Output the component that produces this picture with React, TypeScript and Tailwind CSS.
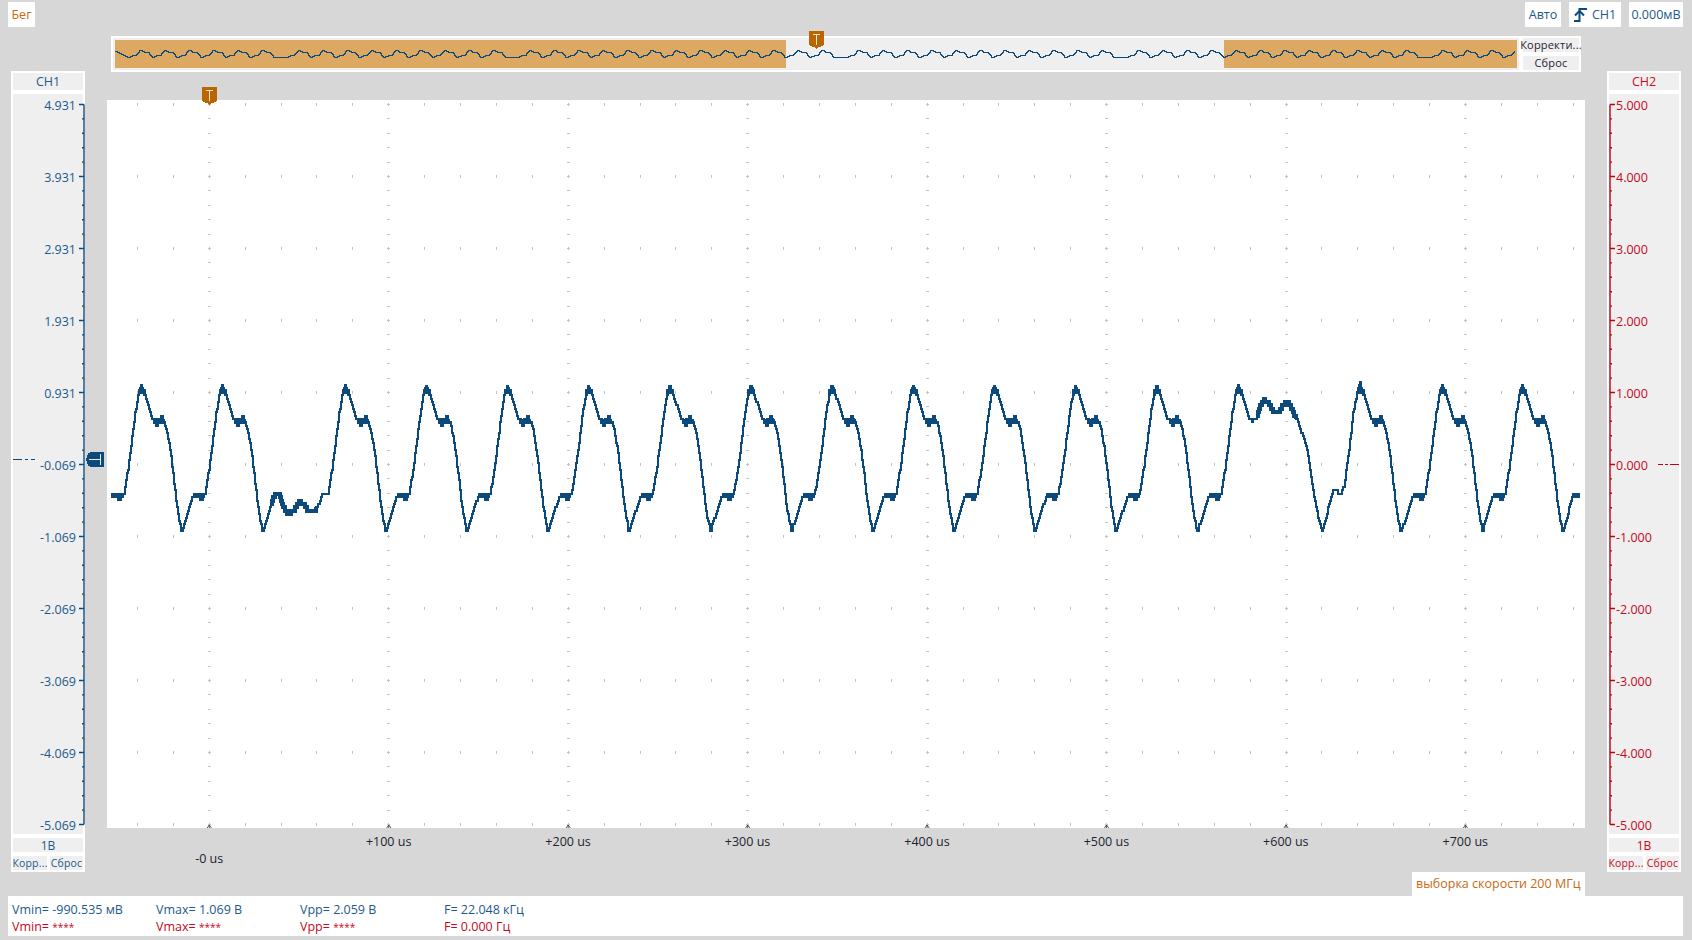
const BLUE = '#0b4a7a'
const RED = '#c00015'
const PEAK_STEP = 81.15

// one regular period of the signal, [offset from peak, y in page px]
const SHAPE: [number, number][] = [
  [-40.3, 530], [-36, 516.7], [-32.7, 506.7], [-29.3, 496], [-27.5, 495], [-17.5, 495], [-16, 486.7],
  [-12.7, 466.7], [-9.3, 440], [-6, 413.3], [-3.3, 396.7], [-1.5, 390.7], [0, 386.7], [1.5, 390.7],
  [4, 396.7], [7.3, 406.7], [11.3, 420], [14, 421], [20, 420], [23.3, 421.7], [25.7, 430], [29, 450],
  [32.3, 476.7], [35.7, 506.7], [39, 525], [41, 530],
]

const GLITCH_A: [number, number][] = [
  [268, 515], [272, 500], [275, 494], [279, 495], [283, 507], [287, 513], [293, 512], [299, 502], [303, 503],
  [307, 511], [311, 512], [315, 510], [318, 505], [323, 493],
]
const GLITCH_B: [number, number][] = [
  [1252, 421], [1256, 418], [1260, 407], [1264, 400], [1267, 401], [1271, 409], [1275, 413], [1279, 412],
  [1283, 405], [1287, 402], [1291, 408], [1297, 420], [1300, 428], [1307, 450], [1313, 490], [1317, 512],
  [1320, 525], [1322, 530], [1326, 518], [1330, 500], [1333, 491], [1336, 491], [1340, 495], [1344, 486],
  [1349, 450], [1353, 413], [1357, 392], [1360, 383],
]

const MAIN_PEAKS = Array.from({ length: 11 }, (_, i) => 345 + i * PEAK_STEP)

function buildTrace() {
  const pts: [number, number][] = [[111, 495]]
  const add = (x: number, y: number) => {
    if (x > pts[pts.length - 1][0]) pts.push([x, y])
  }
  const period = (p: number, from = -99, to = 99) =>
    SHAPE.forEach(([d, y]) => {
      if (d >= from && d <= to) add(p + d, y)
    })
  period(141)
  period(222)
  GLITCH_A.forEach(([x, y]) => add(x, y))
  MAIN_PEAKS.forEach(p => period(p))
  period(1238, -99, 11.3)
  GLITCH_B.forEach(([x, y]) => add(x, y))
  period(1360, 1)
  period(1442)
  period(1522)
  add(1573, 495)
  add(1580, 495)
  return pts
}

function interp(pts: [number, number][], x: number) {
  let i = 1
  while (i < pts.length - 1 && pts[i][0] < x) i++
  const [x0, y0] = pts[i - 1]
  const [x1, y1] = pts[i]
  return y0 + ((y1 - y0) * (x - x0)) / (x1 - x0)
}

function stairPath(pts: [number, number][], x0: number, x1: number, base: number, q: number) {
  const snap = (y: number) => base + Math.round((y - base) / q) * q
  let d = `M${x0} ${snap(interp(pts, x0)).toFixed(1)}`
  for (let x = x0 + 1; x <= x1; x++) {
    d += `H${x}V${snap(interp(pts, x)).toFixed(1)}`
  }
  return d
}

const rect = (x: number, y: number, w: number, h: number) => `M${x} ${y}h${w}v${h}h${-w}Z`

function blocksFor(p: number, pre: boolean, post: boolean) {
  let d = rect(p - 3.5, 389, 8, 5) + rect(p - 1.5, 385, 3.5, 4)
  if (pre) d += rect(p - 28, 492.5, 11, 5) + rect(p - 23.5, 497, 5, 4)
  if (post) {
    d += rect(p + 12, 418.5, 12, 5) + rect(p + 14, 423, 4, 4) + rect(p + 18.5, 415, 4, 4)
    d += rect(p + 39, 526.5, 4, 5)
  }
  return d
}

const trace = buildTrace()
const tracePath = stairPath(trace, 111, 1580, 385, 3.4)
const blocksPath =
  rect(111, 492.5, 13, 5) +
  rect(117, 497, 5, 4) +
  blocksFor(141, false, true) +
  blocksFor(222, true, true) +
  MAIN_PEAKS.map((p, i) => blocksFor(p, i > 0, true)).join('') +
  blocksFor(1238, true, false) +
  blocksFor(1360, false, true) +
  blocksFor(1442, true, true) +
  blocksFor(1522, true, true) +
  rect(1573, 492.5, 7, 5)
const thickA = stairPath(trace, 271, 316, 385, 3.4)
const thickB = stairPath(trace, 1257, 1296, 385, 3.4)

// overview strip: same shape squeezed to about 24px a period
function overviewPeaks() {
  const out: number[] = []
  let p = 140
  const gaps = [262, 493, 818, 1098, 1400]
  while (p < 1520) {
    out.push(p)
    const gap = gaps.some(g => Math.abs(p - g) < 8)
    p += gap ? 36.4 : 24.35
  }
  return out
}

function buildOverview() {
  const k = 24.35 / PEAK_STEP
  const pts: [number, number][] = [[115, 51]]
  overviewPeaks().forEach(p => {
    SHAPE.forEach(([d, y]) => {
      const x = p + d * k
      if (x > pts[pts.length - 1][0]) pts.push([x, 53.5 + (y - 457) * 0.052])
    })
  })
  pts.push([1515, 51.5])
  return pts
}

const overviewPath = stairPath(buildOverview(), 115, 1514, 50, 1)

const SUB_X = Array.from({ length: 41 }, (_, i) => 137.5 + i * 35.89)
const MAJOR_X = Array.from({ length: 8 }, (_, i) => 209.3 + i * 179.45)
const MAJOR_Y = Array.from({ length: 11 }, (_, i) => 104.5 + i * 72)
const SUB_Y = Array.from({ length: 51 }, (_, i) => 104.5 + i * 14.4)

const gridPath =
  MAJOR_Y.flatMap(y => SUB_X.map(x => `M${x.toFixed(1)} ${y - 1.5}v3`)).join('') +
  MAJOR_X.flatMap(x => SUB_Y.map(y => `M${(x - 1.5).toFixed(1)} ${y.toFixed(1)}h3`)).join('')

const LEFT_LABELS = ['4.931', '3.931', '2.931', '1.931', '0.931', '-0.069', '-1.069', '-2.069', '-3.069', '-4.069', '-5.069']
const RIGHT_LABELS = ['5.000', '4.000', '3.000', '2.000', '1.000', '0.000', '-1.000', '-2.000', '-3.000', '-4.000', '-5.000']
const TIME_LABELS = ['-0 us', '+100 us', '+200 us', '+300 us', '+400 us', '+500 us', '+600 us', '+700 us']

const STATS = [
  ['Vmin= -990.535 мВ', 'Vmin= '],
  ['Vmax= 1.069 В', 'Vmax= '],
  ['Vpp= 2.059 В', 'Vpp= '],
  ['F= 22.048 кГц', 'F= 0.000 Гц'],
]

function TMarker() {
  return (
    <svg width="15" height="18" viewBox="0 0 15 18" className="block" shapeRendering="crispEdges">
      <path d="M0 0H15V14H14V15H12V16H9V17H8V18H7V17H6V16H3V15H1V14H0Z" fill="#b96500" />
      <path d="M4 3H11V4H8V14H7V4H4Z" fill="#f4e3cf" />
    </svg>
  )
}

function ScaleTicks({ color, side }: { color: string; side: 'left' | 'right' }) {
  // drawn with the spine on x=1 for the right hand axis, mirrored for the left one
  const ticks = SUB_Y.map((y, i) => `M1 ${(y - 94).toFixed(1)}h${i % 5 === 0 ? 5 : 2}`).join('')
  return (
    <svg
      width="7"
      height="740"
      className={side === 'left' ? 'absolute top-0 -right-[1.5px] -scale-x-100' : 'absolute top-0 -left-[0.5px]'}
    >
      <path d={`M1 10.5V730.5${ticks}`} stroke={color} strokeWidth="1.4" fill="none" />
    </svg>
  )
}

function AxisPanel({ side, title, labels, unit }: { side: 'left' | 'right'; title: string; labels: string[]; unit: string }) {
  const isLeft = side === 'left'
  const color = isLeft ? BLUE : RED
  const textClass = isLeft ? 'text-[#1c5a8c]' : 'text-[#c40a1c]'
  return (
    <div className={`flex h-[801px] w-[74px] flex-col bg-white p-[2px] text-[12.5px] ${textClass}`}>
      <div className="flex h-[17px] items-center justify-center bg-[#efefef] pt-px">{title}</div>
      <div className="relative mt-1 h-[740px] bg-[#efefef]">
        <ScaleTicks color={color} side={side} />
        <div className={`flex flex-col gap-[56px] pt-1 ${isLeft ? 'items-end pr-[7px]' : 'items-start pl-[7px]'}`}>
          {labels.map(l => (
            <span key={l} className="h-4 leading-4">{l}</span>
          ))}
        </div>
        {isLeft ? (
          <svg width="24" height="2" className="absolute left-0 top-[364.5px]" shapeRendering="crispEdges">
            <path d="M0 0h9v1H0ZM12 0h3v1h-3ZM17.500 0h4v1h-4Z" fill={color} />
          </svg>
        ) : (
          <svg width="21" height="2" className="absolute right-0 top-[369.5px]" shapeRendering="crispEdges">
            <path d="M0 0h5v1H0ZM6.500 0h3v1h-3ZM12 0h9v1h-9Z" fill={color} />
          </svg>
        )}
      </div>
      <div className="mt-1 flex h-[14px] items-center justify-center bg-[#efefef] pt-px text-xs">{unit}</div>
      <div className="mt-1 flex h-[14px] justify-between text-[10.5px] leading-[14px] tracking-[0.2px]">
        <div className="flex w-[34px] justify-center whitespace-nowrap bg-[#efefef]">Корр...</div>
        <div className="flex w-[33px] justify-center whitespace-nowrap bg-[#efefef]">Сброс</div>
      </div>
    </div>
  )
}

export default function App() {
  return (
    <div className="flex h-[940px] w-[1692px] flex-col overflow-hidden bg-[#d7d7d7] font-['Open_Sans','Noto_Sans',sans-serif] text-[12.5px]">
      {/* Top bar */}
      <div className="flex h-[27px] items-end justify-between pl-2 pr-[9px]">
        <div className="flex h-[25px] w-[27px] items-center justify-center bg-white pt-px text-[#c96a10]">Бег</div>
        <div className="flex gap-2 text-[#1c5a8c]">
          <div className="flex h-[25px] w-9 items-center justify-center bg-white pt-px">Авто</div>
          <div className="flex h-[25px] w-[52px] items-center justify-center gap-[5px] bg-white pt-px">
            <svg width="13" height="14" viewBox="0 0 13 14" fill="none" stroke={BLUE} strokeWidth="2" className="-mt-px">
              <path d="M0 13H5.500V1H13" />
              <path d="M1 7.500L5.500 3L10 7.500" />
            </svg>
            CH1
          </div>
          <div className="flex h-[25px] w-[54px] items-center justify-center bg-white pt-px">0.000мВ</div>
        </div>
      </div>

      {/* Overview strip */}
      <div className="ml-[111px] mt-[9px] flex h-9 w-[1470px] gap-1 bg-white p-[2px]">
        <div className="h-8 w-[1406px] bg-[#efefef] p-[2px]">
          <div className="relative flex h-7 w-[1402px] justify-between">
            <div className="h-7 w-[671px] bg-[#dda862]" />
            <div className="h-7 w-[293px] bg-[#dda862]" />
            <svg width="1402" height="28" viewBox="115 40 1402 28" className="absolute left-0 top-0">
              <path d={overviewPath} fill="none" stroke={BLUE} strokeWidth="1" shapeRendering="crispEdges" />
            </svg>
            <div className="absolute -top-[9px] left-[694px]"><TMarker /></div>
          </div>
        </div>
        <div className="flex w-14 flex-col justify-between text-[11px] tracking-[0.2px] text-[#2a2230]">
          <div className="flex h-[14px] items-center justify-center whitespace-nowrap bg-[#efefef] pt-px">Корректи...</div>
          <div className="flex h-[14px] items-center justify-center bg-[#efefef] pt-px">Сброс</div>
        </div>
      </div>

      {/* Scales and plot */}
      <div className="-mt-px flex h-[825px] items-start pl-[11px]">
        <AxisPanel side="left" title="CH1" labels={LEFT_LABELS} unit="1В" />
        <div className="relative ml-[22px] flex w-[1478px] flex-col pt-[29px]">
          <div className="absolute -left-[21px] top-[381px]">
            <svg width="18" height="15" viewBox="0 0 18 15" className="block" shapeRendering="crispEdges">
              <path d="M4 0H18V15H4V14H2V12H1V9H0V6H1V3H2V1H4Z" fill={BLUE} />
              <path d="M3 7H14V2H15V13H14V8H3Z" fill="#e6eef5" />
            </svg>
          </div>
          <div className="absolute left-[95px] top-4 z-10"><TMarker /></div>
          <svg width="1478" height="728" viewBox="107 100 1478 728" className="block bg-white">
            <path d={gridPath} stroke="#c4c4c4" strokeWidth="1" fill="none" shapeRendering="crispEdges" />
            {MAJOR_X.map(x => (
              <path key={x} d={`M${x - 2.5} 828.500L${x} 825L${x + 2.5} 828.500M${x} 825V828`} stroke="#333" strokeWidth="0.8" fill="none" />
            ))}
            <path d={tracePath} stroke={BLUE} strokeWidth="2" fill="none" shapeRendering="crispEdges" />
            <path d={blocksPath} fill={BLUE} shapeRendering="crispEdges" />
            <path d={thickA} stroke={BLUE} strokeWidth="4" fill="none" shapeRendering="crispEdges" />
            <path d={thickB} stroke={BLUE} strokeWidth="4" fill="none" shapeRendering="crispEdges" />
          </svg>
          {/* Time labels */}
          <div className="flex h-11 pl-[12.500px] text-[#1a2430]">
            {TIME_LABELS.map((t, i) => (
              <div key={t} className="w-[179.450px] shrink-0 text-center">
                <div className={i === 0 ? 'pt-[22px]' : 'pt-[5px]'}>{t}</div>
              </div>
            ))}
          </div>
          <div className="flex h-6 w-[173px] items-center self-end whitespace-nowrap bg-white pl-1 pt-px text-[#c96a10]">
            выборка скорости 200 МГц
          </div>
        </div>
        <div className="ml-[22px]">
          <AxisPanel side="right" title="CH2" labels={RIGHT_LABELS} unit="1В" />
        </div>
      </div>

      {/* Measurements */}
      <div className="ml-2 grid h-10 w-[1675px] grid-cols-[144px_144px_144px_1fr] content-center whitespace-pre bg-white pl-1 pt-[5px] leading-[17px]">
        {[0, 1].map(row =>
          STATS.map(col => (
            <div key={col[row]} className={row === 0 ? 'text-[#1c5a8c]' : 'text-[#c40a1c]'}>
              {col[row]}
              {row === 1 && col[1].endsWith('= ') && <span className="text-[10px]">****</span>}
            </div>
          )),
        )}
      </div>
    </div>
  )
}
